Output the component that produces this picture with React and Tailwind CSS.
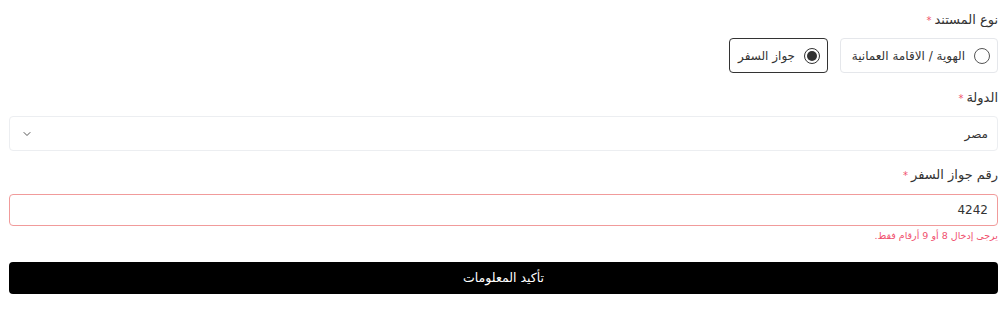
import { ChevronDown } from 'lucide-react';

const Label = ({ children }) => (
  <label className="flex h-[20px] items-center gap-[3px] text-[13px] text-[#333]">
    <span>{children}</span>
    <span className="text-[#f0506e] text-[10px]">*</span>
  </label>
);

const Radio = ({ checked, title }) => (
  <label
    className={`flex h-[35px] items-center gap-[9px] whitespace-nowrap rounded-[4px] border bg-white pl-[10px] pr-[7px] ${
      checked ? 'border-[#333]' : 'border-[#e5e7eb]'
    }`}
  >
    <span
      className={`flex h-[16px] w-[16px] shrink-0 items-center justify-center rounded-full border ${
        checked ? 'border-[#333]' : 'border-[#555]'
      }`}
    >
      {checked && <span className="h-[10px] w-[10px] rounded-full bg-[#333]" />}
    </span>
    <span className="text-[12px] text-[#333]">{title}</span>
  </label>
);

export default function App() {
  return (
    <div
      dir="rtl"
      className="min-h-[311px] bg-white pl-[9px] pr-[6px] pt-[10px]"
      style={{ fontFamily: '"DejaVu Sans", sans-serif' }}
    >
      <Label>نوع المستند</Label>
      <div className="mt-[8px] flex gap-[12px]">
        <div className="w-[158px] shrink-0">
          <Radio title="الهوية / الاقامة العمانية" />
        </div>
        <div className="w-[99px] shrink-0">
          <Radio checked title="جواز السفر" />
        </div>
      </div>

      <div className="mt-[15px]">
        <Label>الدولة</Label>
      </div>
      <div className="mt-[8px] flex h-[35px] items-center justify-between rounded-[4px] border border-[#eceef1] pl-[11px] pr-[9px]">
        <span className="text-[12px] text-[#333]">مصر</span>
        <ChevronDown className="h-[12px] w-[12px] text-[#555]" strokeWidth={2} />
      </div>

      <div className="mt-[14px]">
        <Label>رقم جواز السفر</Label>
      </div>
      <div className="mt-[9px] flex h-[32px] items-center rounded-[4px] border border-[#f19b9b] pr-[9px]">
        <span className="text-[12px] text-[#333]">4242</span>
      </div>
      <p className="mt-[2px] h-[16px] text-[9.5px] leading-4 text-[#f0506e]">يرجى إدخال 8 أو 9 أرقام فقط.</p>

      <button className="mt-[18px] flex h-[32px] w-full items-center justify-center rounded-[4px] bg-black text-[12.5px] text-white">
        تأكيد المعلومات
      </button>
    </div>
  );
}
